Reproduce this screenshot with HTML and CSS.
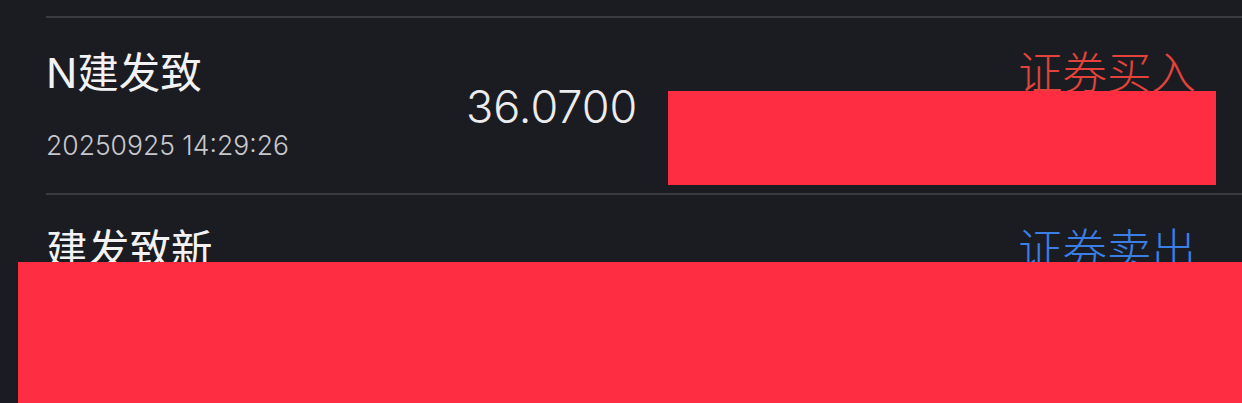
FILE: index.html
```html
<!DOCTYPE html>
<html lang="zh-CN">
<head>
<meta charset="utf-8">
<link rel="stylesheet" href="styles.css">
</head>
<body>
<div class="list">
  <div class="row">
    <div class="info">
      <div class="name">N建发致</div>
      <div class="time">20250925 14:29:26</div>
    </div>
    <div class="price">36.0700</div>
    <div class="side">
      <div class="type buy">证券买入</div>
    </div>
    <div class="redact redact-a"></div>
  </div>
  <div class="row">
    <div class="info">
      <div class="name">建发致新</div>
    </div>
    <div class="price"></div>
    <div class="side">
      <div class="type sell">证券卖出</div>
    </div>
    <div class="redact redact-b"></div>
  </div>
</div>
</body>
</html>
```
FILE: styles.css
```css
html, body {
  margin: 0;
  padding: 0;
  background: #1b1c21;
  overflow: hidden;
}
body {
  width: 1242px;
  height: 403px;
  font-family: Inter, "Noto Sans CJK SC", sans-serif;
}
.list {
  padding-top: 16px;
  padding-left: 46px;
}
.row {
  position: relative;
  border-top: 2px solid #3a3b40;
  height: 175px;
  display: grid;
  grid-template-columns: 420px 1fr auto;
  align-items: center;
  padding-right: 46px;
}
.info {
  align-self: start;
  padding-top: 27px;
}
.name {
  font-size: 41.5px;
  line-height: 50px;
  color: #f2f2f4;
  font-family: "Noto Sans CJK SC", sans-serif;
}
.name::first-letter {
  font-family: Inter, sans-serif;
}
.time {
  margin-top: 31px;
  font-size: 26.5px;
  line-height: 32px;
  color: #c8c8cc;
  font-weight: 300;
}
.price {
  font-size: 45px;
  line-height: 54px;
  color: #ececee;
  font-weight: 300;
  padding-top: 2px;
}
.side {
  align-self: start;
  padding-top: 26px;
}
.type {
  font-size: 44.5px;
  line-height: 52px;
  font-family: "Noto Sans CJK SC", sans-serif;
  font-weight: 300;
}
.buy { color: #e4433b; }
.sell { color: #3b7fe6; }
.redact {
  position: absolute;
  background: #ff2d42;
}
.redact-a {
  left: 622px;
  top: 73px;
  width: 548px;
  height: 94px;
}
.redact-b {
  left: -28px;
  top: 67px;
  width: 1224px;
  height: 160px;
}
```
